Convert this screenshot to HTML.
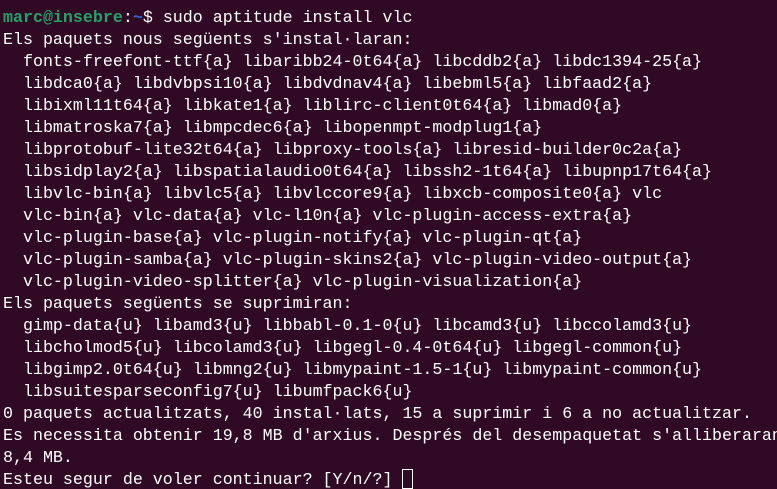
<!DOCTYPE html>
<html><head><meta charset="utf-8"><style>
html,body{margin:0;padding:0;background:#300a24;width:777px;height:489px;overflow:hidden}
pre{margin:0;padding:7px 0 0 3px;font-family:"Liberation Mono",monospace;font-size:16.65px;line-height:22px;color:#ffffff;white-space:pre}
.g{color:#26a269;font-weight:bold}.b{color:#2a6ac8;font-weight:bold}
.cur{display:inline-block;width:11px;height:20px;border:1px solid #fff;vertical-align:-5px;box-sizing:border-box}
</style></head><body><pre><span class="g">marc@insebre</span>:<span class="b">~</span>$ sudo aptitude install vlc
Els paquets nous següents s'instal·laran:
  fonts-freefont-ttf{a} libaribb24-0t64{a} libcddb2{a} libdc1394-25{a}
  libdca0{a} libdvbpsi10{a} libdvdnav4{a} libebml5{a} libfaad2{a}
  libixml11t64{a} libkate1{a} liblirc-client0t64{a} libmad0{a}
  libmatroska7{a} libmpcdec6{a} libopenmpt-modplug1{a}
  libprotobuf-lite32t64{a} libproxy-tools{a} libresid-builder0c2a{a}
  libsidplay2{a} libspatialaudio0t64{a} libssh2-1t64{a} libupnp17t64{a}
  libvlc-bin{a} libvlc5{a} libvlccore9{a} libxcb-composite0{a} vlc
  vlc-bin{a} vlc-data{a} vlc-l10n{a} vlc-plugin-access-extra{a}
  vlc-plugin-base{a} vlc-plugin-notify{a} vlc-plugin-qt{a}
  vlc-plugin-samba{a} vlc-plugin-skins2{a} vlc-plugin-video-output{a}
  vlc-plugin-video-splitter{a} vlc-plugin-visualization{a}
Els paquets següents se suprimiran:
  gimp-data{u} libamd3{u} libbabl-0.1-0{u} libcamd3{u} libccolamd3{u}
  libcholmod5{u} libcolamd3{u} libgegl-0.4-0t64{u} libgegl-common{u}
  libgimp2.0t64{u} libmng2{u} libmypaint-1.5-1{u} libmypaint-common{u}
  libsuitesparseconfig7{u} libumfpack6{u}
0 paquets actualitzats, 40 instal·lats, 15 a suprimir i 6 a no actualitzar.
Es necessita obtenir 19,8 MB d'arxius. Després del desempaquetat s'alliberaran
8,4 MB.
Esteu segur de voler continuar? [Y/n/?] <span class="cur"></span></pre></body></html>
